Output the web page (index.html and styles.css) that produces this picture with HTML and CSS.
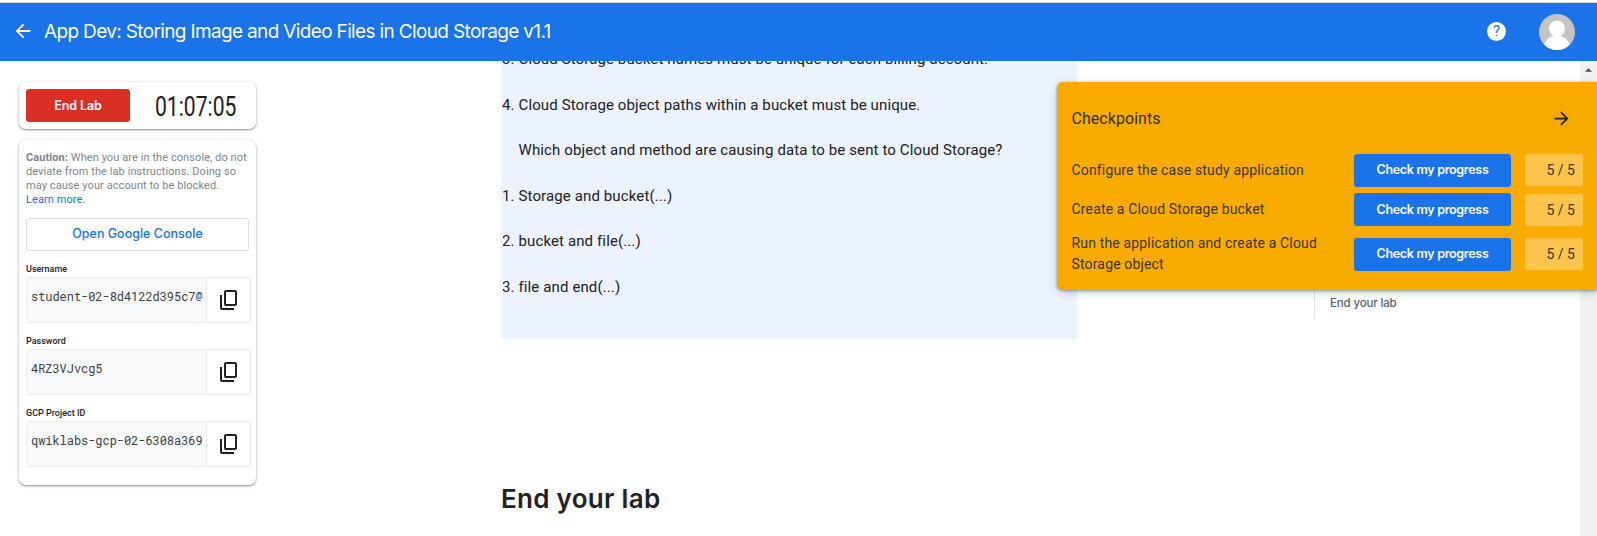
FILE: index.html
```html
<!DOCTYPE html>
<html lang="en">
<head>
<meta charset="utf-8">
<title>App Dev: Storing Image and Video Files in Cloud Storage v1.1</title>
<link rel="stylesheet" href="styles.css">
</head>
<body>
<header class="topbar">
  <svg class="back" viewBox="0 0 24 24"><path d="M20 11H7.83l5.59-5.59L12 4l-8 8 8 8 1.41-1.41L7.83 13H20z"/></svg>
  <h1 class="title"><span class="title-text">App Dev: Storing Image and Video Files in Cloud Storage v1.1</span></h1>
  <span class="help">?</span>
  <svg class="avatar" viewBox="0 0 36 36"><defs><clipPath id="round"><circle cx="18" cy="18" r="18"/></clipPath></defs><g clip-path="url(#round)"><path fill="#c5c5c5" d="M0 0h36v36H0z"/><path fill="#fff" d="M5 31c2-5 5-8 9-9h8c4 1 7 4 9 9v6H5z"/><circle cx="18" cy="14.500" r="8.800" fill="#c5c5c5"/><circle cx="18" cy="14.500" r="8" fill="#fff"/><path fill="#fff" d="M14 20h8v5h-8z"/></g></svg>
</header>
<main class="page">
  <aside class="sidebar">
    <section class="card timer-card">
      <button class="end-lab">End Lab</button>
      <div class="timer"><span class="timer-text">01:07:05</span></div>
    </section>
    <section class="card details">
      <p class="caution"><b>Caution:</b> When you are in the console, do not<br>deviate from the lab instructions. Doing so<br>may cause your account to be blocked.<br><a class="learn">Learn more.</a></p>
      <button class="open-console">Open Google Console</button>
      <div class="credential">
        <div class="label">Username</div>
        <div class="field"><code class="value">student-02-8d4122d395c7@</code><span class="copy"><svg class="copy-icon" viewBox="0 0 24 24"><path d="M18 2H9c-1.100 0-2 .9-2 2v12c0 1.100.9 2 2 2h9c1.100 0 2-.9 2-2V4c0-1.100-.9-2-2-2zm0 14H9V4h9v12zM3 7h2v13h12v2H5c-1.100 0-2-.9-2-2V7z"/></svg></span></div>
      </div>
      <div class="credential">
        <div class="label">Password</div>
        <div class="field"><code class="value">4RZ3VJvcg5</code><span class="copy"><svg class="copy-icon" viewBox="0 0 24 24"><path d="M18 2H9c-1.100 0-2 .9-2 2v12c0 1.100.9 2 2 2h9c1.100 0 2-.9 2-2V4c0-1.100-.9-2-2-2zm0 14H9V4h9v12zM3 7h2v13h12v2H5c-1.100 0-2-.9-2-2V7z"/></svg></span></div>
      </div>
      <div class="credential">
        <div class="label">GCP Project ID</div>
        <div class="field"><code class="value">qwiklabs-gcp-02-6308a369</code><span class="copy"><svg class="copy-icon" viewBox="0 0 24 24"><path d="M18 2H9c-1.100 0-2 .9-2 2v12c0 1.100.9 2 2 2h9c1.100 0 2-.9 2-2V4c0-1.100-.9-2-2-2zm0 14H9V4h9v12zM3 7h2v13h12v2H5c-1.100 0-2-.9-2-2V7z"/></svg></span></div>
      </div>
    </section>
  </aside>
  <article class="content">
    <div class="quiz">
      <div class="row"><span class="num">3.</span><span>Cloud Storage bucket names must be unique for each billing account.</span></div>
      <div class="row"><span class="num">4.</span><span>Cloud Storage object paths within a bucket must be unique.</span></div>
      <div class="row"><span class="num"></span><span>Which object and method are causing data to be sent to Cloud Storage?</span></div>
      <div class="row"><span class="num">1.</span><span>Storage and bucket(...)</span></div>
      <div class="row"><span class="num">2.</span><span>bucket and file(...)</span></div>
      <div class="row"><span class="num">3.</span><span>file and end(...)</span></div>
    </div>
    <h2 class="heading">End your lab</h2>
  </article>
  <nav class="toc"><a class="toc-link">End your lab</a></nav>
  <div class="scrollbar"><svg class="scroll-up" viewBox="0 0 8 4"><path d="M0 4l4-4 4 4z"/></svg></div>
</main>
<section class="checkpoints">
  <div class="cp-head"><span>Checkpoints</span><svg class="arrow" viewBox="0 0 24 24"><path d="M4 11h12.170l-5.590-5.590L12 4l8 8-8 8-1.410-1.410L16.170 13H4z"/></svg></div>
  <div class="cp-row"><span class="cp-name">Configure the case study application</span><button class="check">Check my progress</button><span class="score">5 / 5</span></div>
  <div class="cp-row"><span class="cp-name">Create a Cloud Storage bucket</span><button class="check">Check my progress</button><span class="score">5 / 5</span></div>
  <div class="cp-row cp-tall"><span class="cp-name">Run the application and create a Cloud<br>Storage object</span><button class="check">Check my progress</button><span class="score">5 / 5</span></div>
</section>
</body>
</html>
```
FILE: styles.css
```css
* { box-sizing: border-box; }
body { margin: 0; height: 536px; overflow: hidden; position: relative; background: #fff; color: #202124; font-family: Roboto, sans-serif; display: flex; flex-direction: column; border-top: 2px solid #fff; }
button { border: 0; padding: 0; font-family: Inter, sans-serif; }
h1, h2, p { margin: 0; }

.topbar { position: relative; z-index: 2; flex: none; height: 59px; border-top: 1px solid #d5dbe3; background: #1a73e8; color: #fff; display: flex; align-items: center; padding: 0 22px 0 12px; }
.back { width: 22px; height: 22px; fill: #fff; margin-top: -2px; }
.title { flex: 1; margin: 0 0 0 10px; font: 400 19px/28px Inter, sans-serif; white-space: nowrap; }
.title-text { letter-spacing: -0.65px; }
.help { width: 19px; height: 19px; border-radius: 50%; background: #fff; color: #1a73e8; font-size: 15px; font-weight: 400; line-height: 19px; text-align: center; margin: -2px 33px 0 0; }
.avatar { width: 36px; height: 36px; }

.page { flex: 1; min-height: 0; display: flex; }
.sidebar { width: 501px; padding: 21px 0 0 19px; }
.card { width: 237px; background: #fff; border-radius: 7px; box-shadow: 0 1px 2px rgba(60,64,67,.5), 0 1px 4px rgba(60,64,67,.15); }
.timer-card { height: 47px; padding: 7px; display: flex; }
.end-lab { width: 104px; height: 33px; border-radius: 3px; background: #d93025; color: #fff; font-size: 12.500px; font-weight: 600; letter-spacing: -.1px; }
.timer { width: 82px; height: 33px; margin-left: 25px; }
.timer-text { display: inline-block; font-size: 28.500px; line-height: 35px; transform: scaleX(.74); transform-origin: left; font-weight: 400; }
.details { height: 345px; margin-top: 11px; padding: 11px 7px 0; }
.caution { font-size: 11px; line-height: 14px; letter-spacing: .08px; color: #80868b; white-space: nowrap; }
.learn { color: #1a73e8; }
.open-console { display: block; width: 223px; height: 33px; margin: 11px 0 11px; padding-bottom: 2px; border: 1px solid #dadce0; border-radius: 3px; background: #fff; color: #1a73e8; font-size: 12.500px; font-weight: 500; }
.credential { height: 72px; }
.label { height: 15px; font-size: 9px; line-height: 14px; font-weight: 500; }
.field { width: 225px; height: 46px; display: flex; border: 1px solid #e8eaed; border-radius: 3px; }
.value { width: 180px; padding: 9px 0 0 4px; background: #f8f9fa; font: 12px/18px "Roboto Mono", "DejaVu Sans Mono", monospace; letter-spacing: -.05px; color: #3c4043; white-space: nowrap; overflow: hidden; border-right: 1px solid #e8eaed; }
.copy { flex: 1; display: flex; align-items: center; justify-content: center; }
.copy-icon { width: 24px; height: 24px; fill: #202124; }

.content { width: 576px; }
.quiz { margin-top: -24px; height: 302px; background: #ecf3fe; border-radius: 2px; font-size: 15px; letter-spacing: .12px; }
.row { display: flex; height: 45.500px; line-height: 45px; white-space: nowrap; }
.num { width: 17.500px; padding-left: 1px; }
.heading { margin-top: 142px; font: 600 26px/36px Inter, sans-serif; letter-spacing: .3px; }
.toc { width: 266px; height: 158px; margin: 100px 0 0 237px; border-left: 1px solid #e0e2e5; padding: 134px 0 0 15px; color: #5f6368; font-size: 12px; line-height: 16px; }
.toc-link { font-family: Inter, sans-serif; font-size: 11.500px; font-weight: 500; letter-spacing: -.15px; }
.scrollbar { flex: none; width: 17px; background: #f1f1f1; padding: 7px 0 0 5px; }
.scroll-up { display: block; width: 7px; height: 4px; fill: #505050; }

.checkpoints { position: absolute; z-index: 1; right: 0; top: 80px; width: 540px; height: 208px; padding: 16px 14px 0 14.500px; background: #f9ab00; border-radius: 6px 0 0 6px; box-shadow: 0 1px 3px rgba(60,64,67,.5), 0 3px 10px rgba(60,64,67,.2); }
.cp-head { display: flex; justify-content: space-between; align-items: center; height: 40px; padding-right: 11px; font-size: 16px; color: #33301f; letter-spacing: .05px; }
.arrow { width: 21px; height: 21px; fill: #202124; }
.cp-row { display: flex; align-items: center; height: 32px; margin-top: 7.500px; font-size: 14px; }
.cp-head + .cp-row { margin-top: 16px; }
.cp-tall { height: 42px; margin-top: 7.500px; }
.cp-name { flex: 1; line-height: 21px; letter-spacing: .16px; color: #3a3422; }
.check { width: 157px; height: 33px; padding-bottom: 1px; border-radius: 3px; background: #1a73e8; color: #fff; font-size: 12.500px; font-weight: 600; letter-spacing: -.3px; }
.score { width: 58px; height: 32px; margin-left: 14px; padding-right: 8px; border-radius: 3px; background: #fbc44d; line-height: 32px; text-align: right; color: #3a3422; }
```
